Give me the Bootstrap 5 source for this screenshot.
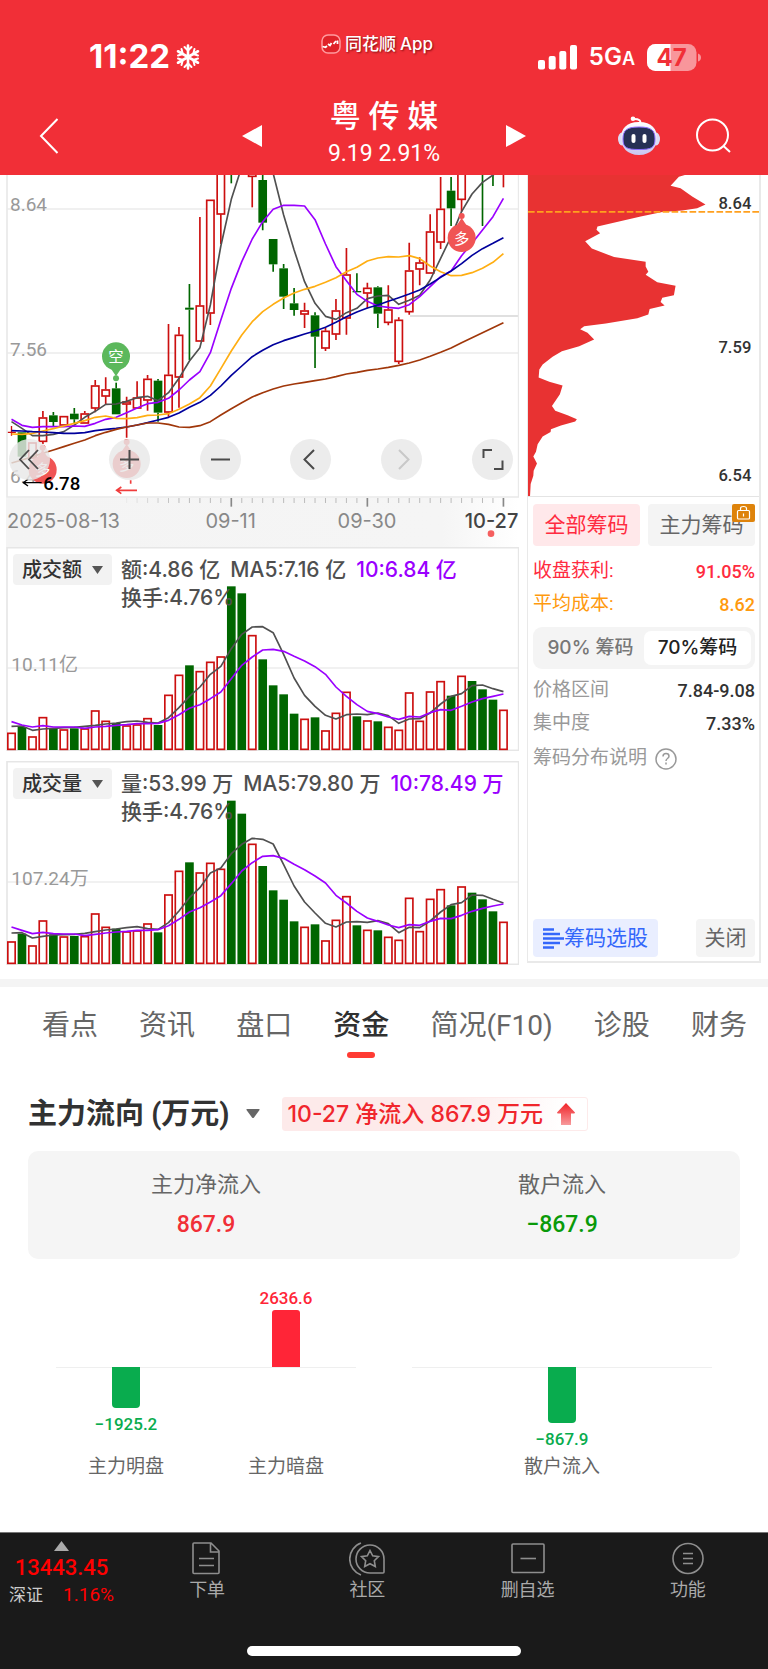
<!DOCTYPE html>
<html lang="zh-CN">
<head>
<meta charset="utf-8">
<meta name="viewport" content="width=device-width, initial-scale=1">
<title>粤传媒</title>
<link href="https://cdn.jsdelivr.net/npm/bootstrap@5.3.0/dist/css/bootstrap.min.css" rel="stylesheet">
<style>
  :root { --cjk: "Noto Sans CJK SC", sans-serif; --app-red: #f12f37; }
  body { font-family: Roboto, var(--cjk); color: #323232; background: #fff; line-height: 1.2; }
  button, a { color: inherit; font-family: inherit; }
  svg { display: block; }
  .ui-inter { font-family: Inter, var(--cjk); }
  .plain-btn { border: 0; background: none; padding: 0; }

  .app-head { background: var(--app-red); color: #fff; height: 175px; }
  .status-bar { height: 98px; padding: 16px 67px 0; display: grid; grid-template-columns: 1fr auto 1fr; }
  .clock-box { padding-left: 22px; gap: 6px; }
  .clock { font-size: 33px; font-weight: 700; }
  .app-tag { font-size: 17px; font-weight: 500; text-shadow: 1px 1px 2px rgba(90,0,0,.7); height: 56px; padding-right: 14px; }
  .net { font-size: 24px; font-weight: 600; }
  .net-small { font-size: 18px; }
  .title-bar { height: 77px; padding: 0 37px 2px; display: grid; grid-template-columns: 1fr auto 1fr; align-items: center; }
  .stock { gap: 66px; }
  .stock-name { font-size: 31px; font-weight: 500; line-height: 36px; white-space: pre; }
  .stock-quote { font-size: 23px; line-height: 38px; }
  .head-tools { gap: 36px; }

  .board { display: grid; grid-template-columns: 513fr 234fr; gap: 8px; padding: 0 7px 4px 6px; }
  .pad-tools { left: 3px; right: 6px; bottom: 67px; }
  .tool-btn { width: 41px; height: 41px; border-radius: 50%; border: 0; padding: 0; background: rgba(232,232,232,.82); }
  .tool-btn.first { margin-right: 9px; }
  .vol-head { top: 7px; left: 7px; gap: 9px; color: #4f4f4f; font-size: 21px; font-weight: 500; line-height: 28px; }
  .vol-text { padding-top: 2px; }
  .vol-line { gap: 10px; }
  .metric-btn { width: 99px; height: 31px; background: #f2f2f2; border: 0; border-radius: 4px; color: #323232; font-size: 20px; font-weight: 500; padding: 0; gap: 10px; }
  .violet { color: #9a00ff; }
  .vol-box { margin-bottom: 10px; }
  .chips { border: 1px solid #e9e9e9; border-width: 0 2px 2px 1px; margin-bottom: 12px; }
  .chips-body { padding: 7px 4px 4px 5px; font-size: 19px; border-top: 1px solid #e4e4e4; }
  .chip-tab { height: 42px; border: 0; border-radius: 4px; background: #f4f4f4; color: #666; font-size: 21px; flex: 1; padding: 0; }
  .chip-tab.on { background: #ffe8ea; color: #ff2b40; }
  .lock { top: 0; right: 0; width: 23px; height: 18px; background: #de830b; border-radius: 2px; }
  .chip-row { height: 33px; display: flex; align-items: center; justify-content: space-between; margin: 0; }
  .chip-row dt { font-weight: 400; }
  .chip-row dd { margin: 0; font-size: 18px; font-weight: 500; }
  .win { color: #ff2b40; }
  .cost { color: #ff9a0e; }
  .rows-a { margin: 9px 0 6px; }
  .rows-b { margin: 5px 0 2px; }
  .seg { height: 42px; background: #f4f4f4; border-radius: 9px; padding: 4px; }
  .seg button { flex: 1; border: 0; background: none; border-radius: 7px; color: #777; font-weight: 500; padding: 0; }
  .seg button.on { background: #fff; color: #222; }
  .grey-t { color: #999; }
  .pick { height: 38px; border-radius: 4px; background: #e9eeff; color: #3467fb; font-size: 21px; padding: 0 10px; }
  .shut { height: 38px; width: 59px; border-radius: 4px; background: #f4f4f4; color: #666; font-size: 21px; }

  .band { height: 8px; background: #f4f4f4; }
  .tabs { padding: 22px 21px 0 42px; font-size: 28px; color: #666; height: 80px; }
  .tabs a { text-decoration: none; white-space: nowrap; line-height: 34px; display: flex; flex-direction: column; align-items: center; gap: 9px; }
  .tabs a.on { color: #303030; font-weight: 500; }
  .tabs a.on::after { content: ""; width: 28px; height: 6px; border-radius: 3px; background: #ff3b33; }
  .flow { padding: 0 28px; }
  .flow-head { padding-top: 28px; height: 66px; }
  .flow-title { font-size: 29px; font-weight: 700; margin: 0; }
  .inflow { height: 34px; margin-left: 22px; padding: 0 12px 0 5px; border: 1px solid #fdeaea; border-radius: 3px; background: linear-gradient(100deg, #fdeaea 55%, #fff 92%); color: #f0262c; font-size: 23px; font-weight: 500; gap: 14px; }
  .sum { background: #f5f5f5; border-radius: 10px; margin-top: 18px; height: 108px; text-align: center; }
  .sum-label { font-size: 22px; color: #666; line-height: 28px; }
  .sum-val { font-size: 23px; font-weight: 500; line-height: 28px; margin-top: 12px; }
  .up { color: #f12f37; } .down { color: #099a09; }
  .bars { padding: 0 28px; gap: 56px; margin-top: 27px; }
  .bar-group { flex: 1; display: flex; position: relative; }
  .bar-col { flex: 1; display: flex; flex-direction: column; align-items: center; font-size: 17px; font-weight: 500; }
  .bar-pair .bar-col { flex: 0 0 140px; }
  .bar-group::before { content: ""; position: absolute; left: 0; right: 0; top: 81px; height: 1px; background: #efefef; }
  .half-up { height: 81px; display: flex; flex-direction: column; align-items: center; justify-content: flex-end; gap: 2px; color: #ff2537; }
  .half-dn { height: 86px; display: flex; flex-direction: column; align-items: center; gap: 6px; color: #09ac4e; }
  .bar { width: 28px; position: relative; }
  .half-up .bar { background: #ff2537; border-radius: 3px 3px 0 0; }
  .half-dn .bar { background: #09ac4e; border-radius: 0 0 4px 4px; }
  .cat { font-size: 19px; font-weight: 400; color: #666; line-height: 28px; }

  .foot { background: #1a1a1a; margin-top: 51px; height: 137px; border-top: 1px solid #777; color: #aaa; display: grid; grid-template-columns: 127px repeat(4, 1fr); grid-template-rows: 113px 24px; }
  .foot a { text-decoration: none; font-size: 18px; text-align: center; padding-top: 6px; }
  .foot svg { margin: 0 auto; }
  .foot a.idx { color: #f00; padding: 8px 4px 0 0; }
  .idx-num { font-size: 22px; font-weight: 500; line-height: 28px; padding-top: 3px; }
  .idx-row { font-size: 19px; line-height: 26px; gap: 20px; }
  .idx-name { font-size: 17px; color: #ccc; }
  .home-bar { grid-column: 1 / -1; width: 274px; height: 10px; border-radius: 5px; background: #fff; margin: 0 auto; }
</style>
</head>
<body>
<header class="app-head">
  <div class="status-bar ui-inter">
    <div class="clock-box d-flex align-items-center">
      <span class="clock">11:22</span>
      <svg width="24" height="26" viewBox="0 0 24 26" fill="none" stroke="#fff" stroke-width="2.6" stroke-linecap="round"><path d="M12 1.500v23M2 7.250l20 11.500M22 7.250L2 18.750"/><path stroke-width="2" d="M8.500 3l3.500 3.500L15.500 3M8.500 23l3.500-3.500 3.500 3.500M2 11.500l4.800-1.500L5.500 5M22 14.500L17.200 16l1.300 5M22 11.500L17.200 10 18.500 5M2 14.500L6.800 16l-1.300 5"/></svg>
    </div>
    <div class="app-tag d-flex align-items-center gap-1">
      <svg width="20" height="20" viewBox="0 0 20 20" fill="none"><rect x="1" y="1" width="18" height="18" rx="6" fill="#e02229" stroke="#ff9a9e" stroke-width="1.500"/><path d="M1.500 12.500l3 .8 1.500-1.300M7 10l2 1.500L10.500 9M12.500 10L15 7M16.500 6.500v3.500" stroke="#fff" stroke-width="1.800"/></svg>
      <span>同花顺<span class="ms-1">App</span></span>
    </div>
    <div class="d-flex align-items-center justify-content-end">
      <svg width="39" height="25" viewBox="0 0 39 25" fill="#fff"><rect y="15" width="7" height="9.500" rx="2"/><rect x="10.700" y="11" width="7" height="13.500" rx="2"/><rect x="21.300" y="6" width="7" height="18.500" rx="2"/><rect x="32" width="7" height="24.500" rx="2"/></svg>
      <span class="net ms-2 me-2 ps-1 pe-1">5G<span class="net-small">A</span></span>
      <svg width="54" height="27" viewBox="0 0 54 27"><defs><clipPath id="bat"><rect width="49.500" height="27" rx="8.500"/></clipPath></defs><g clip-path="url(#bat)"><rect width="50" height="27" fill="#f8969b"/><rect width="23.500" height="27" fill="#fff"/></g><path d="M51 9.500q3 1 3 4t-3 4z" fill="#f8969b"/><text x="24.700" y="22" text-anchor="middle" font-family="Inter" font-weight="700" font-size="24" fill="#f12f37">47</text></svg>
    </div>
  </div>
  <div class="title-bar">
    <button class="plain-btn text-start" aria-label="返回"><svg width="22" height="36" viewBox="0 0 22 36" fill="none" stroke="#fff" stroke-width="2"><path d="M20.500 1L4 18l16.500 17"/></svg></button>
    <div class="stock d-flex align-items-center">
      <button class="plain-btn" aria-label="上一只"><svg width="20" height="22" viewBox="0 0 20 22" fill="#fff"><path d="M20 0v22L0 11z"/></svg></button>
      <div class="text-center">
        <div class="stock-name">粤 传 媒</div>
        <div class="stock-quote">9.19 2.91%</div>
      </div>
      <button class="plain-btn" aria-label="下一只"><svg width="20" height="22" viewBox="0 0 20 22" fill="#fff"><path d="M0 0v22l20-11z"/></svg></button>
    </div>
    <div class="head-tools d-flex justify-content-end align-items-center">
      <button class="plain-btn" aria-label="智能助手"><svg width="42" height="40" viewBox="0 0 42 40"><defs><linearGradient id="rb" x1="0" y1="0" x2="0" y2="1"><stop offset="0" stop-color="#fff"/><stop offset="1" stop-color="#c9c6f0"/></linearGradient></defs><path d="M22 8q2-5-6-5" stroke="#fff" stroke-width="1.800" fill="none"/><circle cx="15" cy="2.800" r="2.300" fill="#fff"/><ellipse cx="4" cy="23" rx="4" ry="6.500" fill="#dcdcf5"/><ellipse cx="38" cy="23" rx="4" ry="6.500" fill="#dcdcf5"/><path d="M21 6c13 0 18 7 18 16S33 39 21 39 3 31 3 22 8 6 21 6z" fill="url(#rb)"/><path d="M21 11c12 0 16 3 16 12s-4 10.500-16 10.500S5 32 5 23s4-12 16-12z" fill="#263055" stroke="#8d6cff" stroke-width="1"/><rect x="13.500" y="18" width="4" height="9" rx="2" fill="#fff"/><rect x="24.500" y="18" width="4" height="9" rx="2" fill="#fff"/></svg></button>
      <button class="plain-btn" aria-label="搜索"><svg width="35" height="35" viewBox="0 0 35 35" fill="none" stroke="#fff" stroke-width="2"><circle cx="16.500" cy="17" r="15.500"/><path d="M27.500 28l6.500 6"/></svg></button>
    </div>
  </div>
</header>

<main>
  <section class="board">
    <div>
      <div class="position-relative">
        <svg id="kline" viewBox="18 15 1539 1117" width="100%" font-family="Roboto"></svg>
        <div class="pad-tools position-absolute d-flex justify-content-between">
          <button class="tool-btn first" aria-label="最早"><svg width="41" height="41" viewBox="0 0 41 41" fill="none" stroke="#4a4a4a" stroke-width="1.800"><path d="M20 11l-9 9.500 9 9.500M29 11l-9 9.500 9 9.500"/></svg></button>
          <button class="tool-btn" aria-label="放大"><svg width="41" height="41" viewBox="0 0 41 41" stroke="#4a4a4a" stroke-width="2"><path d="M11 20.500h19M20.500 11v19"/></svg></button>
          <button class="tool-btn" aria-label="缩小"><svg width="41" height="41" viewBox="0 0 41 41" stroke="#4a4a4a" stroke-width="2"><path d="M11 20.500h19"/></svg></button>
          <button class="tool-btn" aria-label="左移"><svg width="41" height="41" viewBox="0 0 41 41" fill="none" stroke="#4a4a4a" stroke-width="2"><path d="M24 11l-9.500 9.500L24 30"/></svg></button>
          <button class="tool-btn" aria-label="右移"><svg width="41" height="41" viewBox="0 0 41 41" fill="none" stroke="#c8c8c8" stroke-width="2"><path d="M18 11l9.500 9.500L18 30"/></svg></button>
          <button class="tool-btn" aria-label="全屏"><svg width="41" height="41" viewBox="0 0 41 41" fill="none" stroke="#4a4a4a" stroke-width="2"><path d="M11.500 19v-8H20M22 30h8.500v-8.500"/></svg></button>
        </div>
      </div>
      <div class="vol-box position-relative">
        <svg id="vol1" viewBox="18 50 1539 612" width="100%" font-family="Roboto"></svg>
        <div class="vol-head position-absolute d-flex ui-inter">
          <button class="metric-btn d-flex align-items-center justify-content-center">成交额<svg width="11" height="8" viewBox="0 0 11 8" fill="#555"><path d="M0 0h11L5.500 8z"/></svg></button>
          <div class="vol-text"><div class="vol-line d-flex"><span>额:4.86 亿</span><span>MA5:7.16 亿</span><span class="violet">10:6.84 亿</span></div><div>换手:4.76%</div></div>
        </div>
      </div>
      <div class="vol-box position-relative">
        <svg id="vol2" viewBox="18 50 1539 612" width="100%" font-family="Roboto"></svg>
        <div class="vol-head position-absolute d-flex ui-inter">
          <button class="metric-btn d-flex align-items-center justify-content-center">成交量<svg width="11" height="8" viewBox="0 0 11 8" fill="#555"><path d="M0 0h11L5.500 8z"/></svg></button>
          <div class="vol-text"><div class="vol-line d-flex"><span>量:53.99 万</span><span>MA5:79.80 万</span><span class="violet">10:78.49 万</span></div><div>换手:4.76%</div></div>
        </div>
      </div>
    </div>

    <aside class="chips d-flex flex-column">
      <svg viewBox="36 15 695 967" width="100%" font-family="Roboto" font-weight="500" font-size="50" fill="#323232">
        <path fill="#e83232" d="M36 15H508L490 20 465 47 495 55 530 80 570 104 545 115 500 122 440 126 375 140 310 155 245 170 242 180 253 190 208 214 228 236 295 262 390 276 390 290 398 306 390 315 425 338 480 348 475 377 440 384 435 397 447 408 402 418 398 435 365 446 270 462 205 470 193 479 215 490 235 510 190 530 138 545 110 562 80 585 70 600 68 624 100 637 140 648 132 675 108 710 118 724 155 738 183 750 178 757 135 769 105 780 104 788 80 802 65 825 60 848 52 862 63 883 53 905 52 920 44 945 42 983H36z"/>
        <path d="M36 126H736" stroke="#ffa01e" stroke-width="5" stroke-dasharray="20 7"/>
        <g text-anchor="end"><text x="708" y="118">8.64</text><text x="708" y="551">7.59</text><text x="708" y="937">6.54</text></g>
      </svg>
      <div class="chips-body d-flex flex-column flex-grow-1">
        <div class="d-flex gap-2">
          <button class="chip-tab on">全部筹码</button>
          <button class="chip-tab position-relative">主力筹码<span class="lock position-absolute"><svg width="23" height="18" viewBox="0 0 23 18" fill="none" stroke="#fff" stroke-width="1.200"><rect x="5.500" y="6.500" width="12" height="8.500" rx="1"/><path d="M8.500 6.500V4.500q0-2 3-2t3 2v2M11.500 9.500v3"/></svg></span></button>
        </div>
        <dl class="rows-a">
          <div class="chip-row win"><dt>收盘获利:</dt><dd>91.05%</dd></div>
          <div class="chip-row cost"><dt>平均成本:</dt><dd>8.62</dd></div>
        </dl>
        <div class="seg d-flex ui-inter"><button>90% 筹码</button><button class="on">70%筹码</button></div>
        <dl class="rows-b">
          <div class="chip-row"><dt class="grey-t">价格区间</dt><dd>7.84-9.08</dd></div>
          <div class="chip-row"><dt class="grey-t">集中度</dt><dd>7.33%</dd></div>
        </dl>
        <a href="#" class="chip-row grey-t justify-content-start text-decoration-none">筹码分布说明<svg class="ms-2" width="22" height="22" viewBox="0 0 22 22" fill="none" stroke="#999" stroke-width="1.500"><circle cx="11" cy="11" r="10"/><path d="M8 8.500q0-3 3-3t3 2.700q0 1.300-1.500 2.300t-1.500 2.500M11 14.500v2"/></svg></a>
        <div class="d-flex justify-content-between mt-auto">
          <button class="plain-btn pick d-flex align-items-center"><svg width="21" height="21" viewBox="0 0 21 21" stroke="#3467fb" stroke-width="2.400"><path d="M0 1.500h11M0 6h17M0 10.500h21M0 15h17M0 19.500h11"/></svg>筹码选股</button>
          <button class="plain-btn shut">关闭</button>
        </div>
      </div>
    </aside>
  </section>

  <div class="band"></div>
  <nav class="tabs d-flex justify-content-between">
    <a href="#">看点</a><a href="#">资讯</a><a href="#">盘口</a><a href="#" class="on">资金</a><a href="#">简况(F10)</a><a href="#">诊股</a><a href="#">财务</a>
  </nav>

  <section class="flow">
    <div class="flow-head d-flex align-items-center">
      <h2 class="flow-title">主力流向 (万元)</h2>
      <svg class="ms-3" width="14" height="10" viewBox="0 0 14 10" fill="#666"><path d="M1 0h12q1 0 .5 1L8 8.500q-1 1-2 0L.5 1Q0 0 1 0z"/></svg>
      <div class="inflow ui-inter d-flex align-items-center">10-27 净流入 867.9 万元<svg width="18" height="22" viewBox="0 0 18 22"><defs><linearGradient id="ar" x1="0" y1="0" x2="0" y2="1"><stop offset="0" stop-color="#f12328"/><stop offset="1" stop-color="#f79a9c"/></linearGradient></defs><path d="M9 0l9 9.500q0 1-1 1h-3V22H4V10.500H1q-1 0-1-1z" fill="url(#ar)"/></svg></div>
    </div>
    <div class="sum row g-0 align-content-center">
      <div class="col-6"><div class="sum-label">主力净流入</div><div class="sum-val up">867.9</div></div>
      <div class="col-6"><div class="sum-label">散户流入</div><div class="sum-val down">−867.9</div></div>
    </div>
    <div class="bars d-flex">
      <div class="bar-group bar-pair justify-content-between">
        <div class="bar-col"><div class="half-up"></div><div class="half-dn"><div class="bar" style="height:41px"></div>−1925.2</div><div class="cat">主力明盘</div></div>
        <div class="bar-col"><div class="half-up">2636.6<div class="bar" style="height:57px"></div></div><div class="half-dn"></div><div class="cat">主力暗盘</div></div>
      </div>
      <div class="bar-group">
        <div class="bar-col"><div class="half-up"></div><div class="half-dn"><div class="bar" style="height:56px"></div>−867.9</div><div class="cat">散户流入</div></div>
      </div>
    </div>
  </section>
</main>

<footer class="foot">
  <a href="#" class="idx"><svg width="15" height="10" viewBox="0 0 15 10" fill="#aaa"><path d="M7.500 0L15 10H0z"/></svg><div class="idx-num">13443.45</div><div class="idx-row d-flex justify-content-center"><span class="idx-name">深证</span><span>1.16%</span></div></a>
  <a href="#"><svg width="36" height="40" viewBox="0 0 36 40" fill="none" stroke="#8e8e8e" stroke-width="1.600"><path d="M5 4h17l8 8v21.500q0 1-1 1H5q-1 0-1-1V5q0-1 1-1zM21.500 4v9H30M10 19.500h15M10 26.500h15"/></svg>下单</a>
  <a href="#"><svg width="36" height="40" viewBox="0 0 36 40" fill="none" stroke="#8e8e8e" stroke-width="1.600"><path d="M12 4A17 17 0 0 0 12 36M35 20A14 14 0 1 0 21 34H34q1 0 1-1zM21 11.500l2.700 5.300 5.800.8-4.200 4.100 1 5.800L21 24.700l-5.300 2.800 1-5.800-4.200-4.100 5.800-.8z"/></svg>社区</a>
  <a href="#"><svg width="36" height="40" viewBox="0 0 36 40" fill="none" stroke="#8e8e8e" stroke-width="1.600"><rect x="2" y="5" width="32" height="28.500" rx="1"/><path d="M10.500 19.500h15.500"/></svg>删自选</a>
  <a href="#"><svg width="36" height="40" viewBox="0 0 36 40" fill="none" stroke="#8e8e8e" stroke-width="1.600"><circle cx="18" cy="19.500" r="15"/><path d="M13 14.500h10M13 19.500h10M13 24.500h10"/></svg>功能</a>
  <div class="home-bar"></div>
</footer>

<script>
  const RED = '#cc0f0f', GREEN = '#006600', STEP = 31.4, X0 = 34.500;
  const cx = i => X0 + STEP * i;
  const line = (a, c) => `<polyline fill="none" stroke="${c}" stroke-width="5" stroke-linejoin="round" points="${a.map((y, i) => cx(i) + ',' + y).join(' ')}"/>`;

  // colour, high, body top, body bottom, low
  const candles = [
    ['x',768,785,788,797],['g',787,787,860,860],['r',817,817,865,865],['r',723,742,815,822],['g',726,736,756,770],['r',738,738,766,766],
    ['g',714,731,748,760],['r',723,730,760,760],['r',630,646,715,727],['r',622,658,679,703],['g',638,655,733,733],['r',680,694,703,803],
    ['r',634,682,715,715],['r',615,626,691,722],['g',627,632,728,755],['r',462,614,727,740],['r',471,494,622,713],['g',342,413,419,570],
    ['r',141,406,514,514],['r',89,89,430,465],['r',0,0,133,222],['g',0,0,10,40],null,['r',0,0,20,112],
    ['g',10,30,158,181],['g',207,207,283,305],['g',282,295,380,417],['g',354,400,420,437],['r',398,421,433,474],['g',427,436,500,594],
    ['r',474,482,535,543],['r',387,421,493,510],['r',234,313,445,494],['g',310,363,367,367],['r',338,353,370,415],['g',349,352,431,474],
    ['r',346,418,458,466],['r',442,449,575,582],['r',218,301,426,434],['r',262,277,298,346],['r',133,184,310,310],['r',21,116,217,237],
    ['g',21,62,115,168],['r',0,0,89,125],null,['g',0,0,5,168],['g',0,0,5,48],['r',0,0,5,52]
  ];
  const ma = {
    '#505050': [755,775,797,797,793,785,765,742,724,703,702,694,683,679,692,668,625,573,533,405,228,88,-10,-150,-100,10,135,240,335,400,439,448,428,415,386,378,376,403,391,376,330,265,200,125,72,37,15,-5],
    '#9a00ff': [748,766,772,770,770,770,768,769,760,748,742,728,714,701,697,685,660,630,605,548,450,355,275,207,155,118,106,106,108,149,222,290,332,373,394,408,412,415,404,380,350,320,303,257,220,180,140,85],
    '#ffae12': [792,793,790,783,776,768,760,752,742,738,745,746,743,736,735,731,718,702,683,648,596,543,495,455,425,403,384,369,358,349,337,323,305,292,273,264,260,261,257,266,288,305,317,316,308,295,277,251],
    '#00009c': [782,783,785,786,788,790,790,788,782,778,775,771,765,758,750,742,729,712,697,676,648,616,588,560,541,524,512,502,492,483,472,457,440,426,414,405,394,383,372,360,342,322,303,281,256,236,220,203],
    '#a0370a': [879,870,860,850,840,830,820,810,797,787,778,771,765,759,759,763,771,772,767,755,735,716,698,681,668,657,648,642,637,632,627,620,612,607,601,597,592,586,579,570,559,547,534,518,503,488,473,458]
  };
  let k = '<defs><linearGradient id="strip"><stop offset="0" stop-color="#f4f4f4"/><stop offset=".85" stop-color="#f5f5f5"/><stop offset="1" stop-color="#fff"/></linearGradient></defs>'
    + '<rect x="18" y="983" width="1539" height="149" fill="url(#strip)"/>'
    + '<path d="M20 117H1555M20 549H1555" stroke="#ececec" stroke-width="4"/><path d="M1230 438H1555" stroke="#d6d6d6" stroke-width="5"/>'
    + '<path d="M21 0V981H1556V0" fill="none" stroke="#e9e9e9" stroke-width="5"/>'
    + '<g font-size="57" fill="#999"><text x="30" y="124">8.64</text><text x="30" y="558">7.56</text><text x="30" y="939">6.48</text></g>';
  candles.forEach((c, i) => {
    if (!c) return;
    const [t, h, a, b, l] = c, x = cx(i), col = t === 'g' ? GREEN : RED;
    if (t === 'x') { k += `<path d="M${x} ${h}V${l}M${x - 11} 787h24" stroke="${col}" stroke-width="4"/>`; return; }
    k += `<path d="M${x} ${h}V${a}M${x} ${b}V${l}" stroke="${col}" stroke-width="5"/>`;
    k += t === 'g' ? `<rect x="${x - 13}" y="${a}" width="26" height="${b - a}" fill="${col}"/>`
                   : `<rect x="${x - 11}" y="${a + 2}" width="22" height="${b - a - 3}" fill="#fff" stroke="${col}" stroke-width="5"/>`;
  });
  for (const c in ma) k += line(ma[c], c);
  const pin = (x, y, s, c, up) => `<g fill="${c}"><circle cx="${x}" cy="${y}" r="42"/><path d="M${x - 16} ${y + (up ? -36 : 36)}h32l-16 ${up ? -24 : 24}z"/><circle cx="${x}" cy="${y + (up ? -66 : 66)}" r="9"/></g><text x="${x}" y="${y + 17}" fill="#fff" font-size="46" font-family="Noto Sans CJK SC" text-anchor="middle">${s}</text>`;
  k += pin(348, 559, '空', '#5cb85c', false) + pin(1385, 204, '多', '#f05454', true) + pin(128, 899, '多', '#f05454', true) + pin(380, 882, '多', '#f05454', true);
  k += '<path d="M125 938H70m14-10l-14 10 14 10" fill="none" stroke="#000" stroke-width="4"/><text x="130" y="959" font-size="56" font-weight="500">6.78</text>';
  k += '<path d="M411 961H350m14-10l-14 10 14 10M392 931v10" fill="none" stroke="#f03c3c" stroke-width="5"/>';
  for (let i = 11; i < 48; i++) {
    const major = i === 21 || i === 34 || i === 47;
    k += `<path d="M${cx(i)} 984v${major ? 26 : 15}" stroke="${major ? '#888' : '#bbb'}" stroke-width="${major ? 5 : 3}" opacity="${Math.min(1, (i - 10) / 6)}"/>`;
  }
  k += '<g font-size="60" fill="#888" font-family="Inter"><text x="21" y="1075">2025-08-13</text><text x="692" y="1075" text-anchor="middle">09-11</text><text x="1101" y="1075" text-anchor="middle">09-30</text><text x="1555" y="1075" text-anchor="end" fill="#444" font-weight="500">10-27</text></g><circle cx="1473" cy="1091" r="10" fill="#f55f5f"/>';
  document.getElementById('kline').innerHTML = k;

  const kinds = 'rgrrgrgrrrgrrrgrrgrrrggrggggrgrrrgrgrrrrrrgrgggr';
  function volume(id, top, m5, m10, label) {
    let s = '<path d="M20 413H1555" stroke="#ececec" stroke-width="4"/><rect x="21" y="52" width="1535" height="608" fill="none" stroke="#e6e6e6" stroke-width="5"/>';
    s += `<text x="34" y="423" font-size="57" fill="#999" font-family="Roboto, 'Noto Sans CJK SC'">${label}</text>`;
    top.forEach((y, i) => {
      const x = cx(i);
      s += kinds[i] === 'g' ? `<rect x="${x - 13}" y="${y}" width="26" height="${659 - y}" fill="${GREEN}"/>`
                            : `<rect x="${x - 11}" y="${y + 2}" width="22" height="${655 - y}" fill="#fff" stroke="${RED}" stroke-width="5"/>`;
    });
    document.getElementById(id).innerHTML = s + line(m5, '#505050') + line(m10, '#9a00ff');
  }
  volume('vol1',
    [607,590,618,560,594,597,594,594,540,571,578,585,582,563,584,493,433,405,422,394,378,168,189,314,387,465,492,550,565,561,600,547,484,558,570,573,589,598,486,571,483,452,496,436,452,477,508,538],
    [588,587,600,596,594,592,591,588,585,581,578,574,572,576,578,562,532,498,470,432,408,355,312,290,289,307,372,443,495,528,555,566,553,551,553,548,556,579,566,565,548,521,498,490,466,464,475,484],
    [574,584,590,586,590,590,590,594,590,588,585,583,580,580,579,570,553,534,523,505,485,445,405,380,359,357,363,378,392,409,432,470,498,523,543,550,560,567,558,560,547,538,540,528,515,505,498,491], '10.11亿');
  volume('vol2',
    [591,568,603,528,570,576,575,575,507,547,553,561,558,537,564,450,379,354,384,355,373,169,208,298,365,438,466,531,547,540,588,526,455,543,556,558,577,586,460,560,463,434,483,426,445,465,501,532],
    [566,565,581,576,572,571,570,567,562,557,554,550,547,553,555,535,500,460,430,386,371,328,300,282,285,299,361,425,473,506,537,548,533,532,534,529,538,565,549,550,530,503,481,475,452,453,465,476],
    [548,558,568,564,568,569,569,574,570,566,563,561,558,558,556,544,525,503,490,473,454,418,380,355,336,334,342,360,376,395,416,453,476,501,521,531,542,550,541,543,531,522,523,513,501,492,485,479], '107.24万');
</script>
<script src="https://cdn.jsdelivr.net/npm/bootstrap@5.3.0/dist/js/bootstrap.bundle.min.js"></script>
</body>
</html>
